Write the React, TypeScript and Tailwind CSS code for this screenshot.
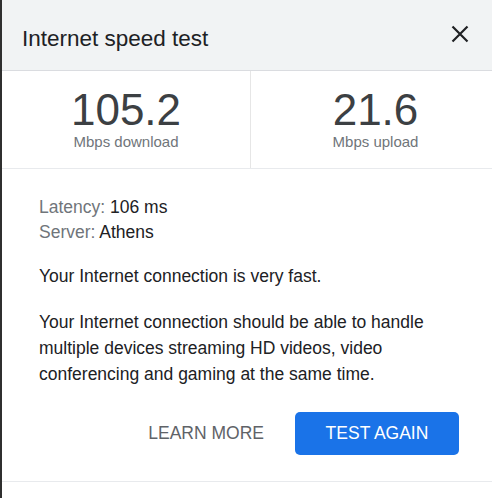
import React from 'react';

const Stat = ({ value, label, border }: { value: string; label: string; border?: boolean }) => (
  <div className={`w-[249px] shrink-0 flex flex-col items-center pt-[14px] ${border ? 'border-r border-[#e6e6e6]' : ''}`}>
    <div className="text-[44px] leading-[50px] text-[#3c4043]">{value}</div>
    <div className="text-[15px] leading-[16px] text-[#70757a] -mt-[1px]">{label}</div>
  </div>
);

export default function App() {
  return (
    <div className="w-[492px] h-[498px] bg-white border-l-2 border-[#2f2f2f] font-['Liberation_Sans',Arial,sans-serif] overflow-hidden">
      <header className="h-[71px] bg-[#f1f3f4] border-b border-[#dadce0] flex items-center justify-between pl-[20px] pr-[22px]">
        <h1 className="text-[22.5px] text-[#202124] mt-[8px]">Internet speed test</h1>
        <button className="text-[#202124] -mt-[2px]">
          <svg width="20" height="20" viewBox="0 0 20 20" fill="none" stroke="currentColor" strokeWidth="2.2">
            <path d="M2.5 2.5L17.5 17.5M17.5 2.5L2.5 17.5" />
          </svg>
        </button>
      </header>

      <div className="flex h-[98px] border-b border-[#e8eaed]">
        <Stat value="105.2" label="Mbps download" border />
        <Stat value="21.6" label="Mbps upload" />
      </div>

      <div className="w-[457px] pl-[37px] pt-[26px] text-[17.5px] text-[#202124]">
        <div className="leading-[25px]">
          <div><span className="text-[#70757a]">Latency:</span> 106 ms</div>
          <div><span className="text-[#70757a]">Server:</span> Athens</div>
        </div>
        <p className="mt-[18px] leading-[26px]">Your Internet connection is very fast.</p>
        <p className="mt-[20px] leading-[26px]">
          Your Internet connection should be able to handle multiple devices streaming HD videos, video conferencing and gaming at the same time.
        </p>
        <div className="flex justify-end items-center gap-[31px] mt-[25px]">
          <button className="text-[17.5px] text-[#5f6368]">LEARN MORE</button>
          <button className="w-[164px] h-[43px] rounded-[5px] bg-[#1a73e8] text-white text-[17.5px]">TEST AGAIN</button>
        </div>
      </div>
      <div className="mt-[26px] border-b border-[#e8eaed]" />
    </div>
  );
}
